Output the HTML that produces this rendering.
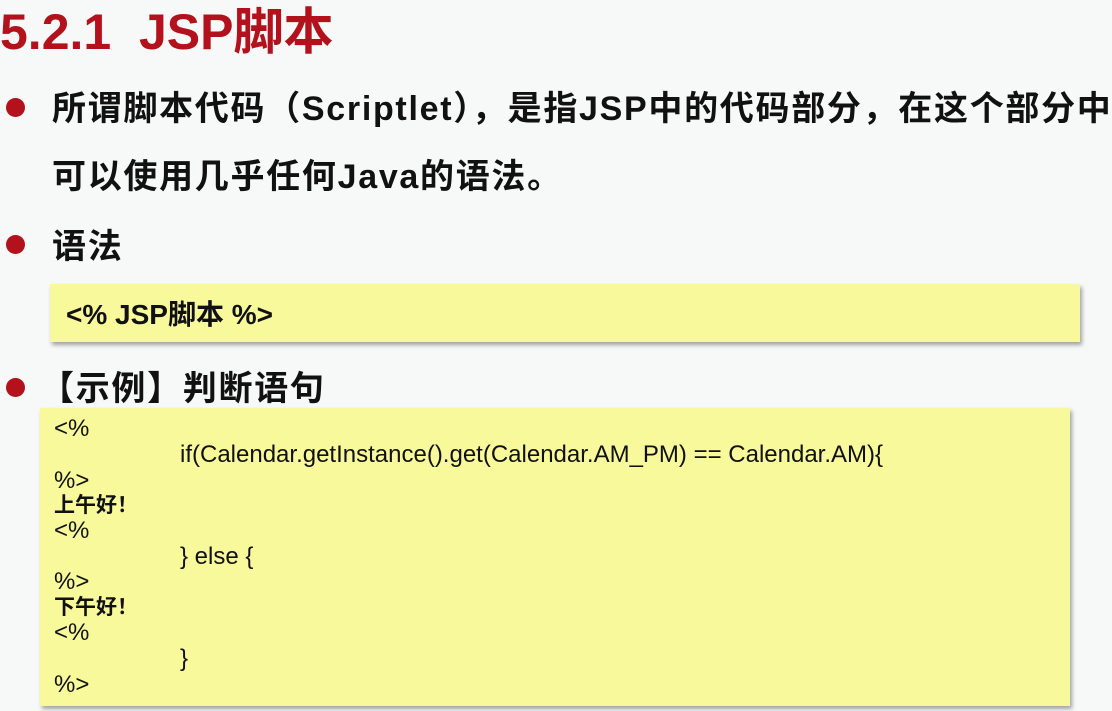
<!DOCTYPE html>
<html><head><meta charset="utf-8"><style>
body{margin:0;width:1112px;height:711px;background:#f7f8f8;position:relative;overflow:hidden;font-family:"Liberation Sans","Noto Sans CJK SC",sans-serif;}
.t{position:absolute;left:0;top:-8px;font-size:50px;font-weight:bold;color:#b3121c;white-space:nowrap;}
.b{position:absolute;font-size:34px;font-weight:bold;color:#111;white-space:nowrap;letter-spacing:1.7px;}
.dot{position:absolute;width:19px;height:19px;border-radius:50%;background:#b3121c;left:6px;}
.box{position:absolute;background:#f8f99b;box-shadow:2px 3px 4px rgba(0,0,0,.35);}
.c{position:absolute;font-size:24px;line-height:26px;color:#111;white-space:nowrap;}
</style></head><body>
<div class="t">5.2.1&nbsp; JSP脚本</div>
<div class="dot" style="top:98px"></div>
<div class="b" style="left:52px;top:81px">所谓脚本代码（Scriptlet），是指JSP中的代码部分，在这个部分中</div>
<div class="b" style="left:52px;top:149px">可以使用几乎任何Java的语法。</div>
<div class="dot" style="top:235px"></div>
<div class="b" style="left:52px;top:219px">语法</div>
<div class="box" style="left:50px;top:284px;width:1030px;height:58px"></div>
<div class="c" style="left:66px;top:302px;font-size:28px;font-weight:bold">&lt;% JSP脚本 %&gt;</div>
<div class="dot" style="top:378px"></div>
<div class="b" style="left:40px;top:361px">【示例】判断语句</div>
<div class="box" style="left:40px;top:408px;width:1030px;height:298px"></div>
<div class="c" style="left:54px;top:416px">&lt;%</div>
<div class="c" style="left:180px;top:442px">if(Calendar.getInstance().get(Calendar.AM_PM) == Calendar.AM){</div>
<div class="c" style="left:54px;top:468px">%&gt;</div>
<div class="c" style="left:54px;top:493px;font-weight:bold;font-size:21px">上午好！</div>
<div class="c" style="left:54px;top:518px">&lt;%</div>
<div class="c" style="left:180px;top:544px">} else {</div>
<div class="c" style="left:54px;top:569px">%&gt;</div>
<div class="c" style="left:54px;top:595px;font-weight:bold;font-size:21px">下午好！</div>
<div class="c" style="left:54px;top:620px">&lt;%</div>
<div class="c" style="left:180px;top:646px">}</div>
<div class="c" style="left:54px;top:672px">%&gt;</div>
</body></html>
